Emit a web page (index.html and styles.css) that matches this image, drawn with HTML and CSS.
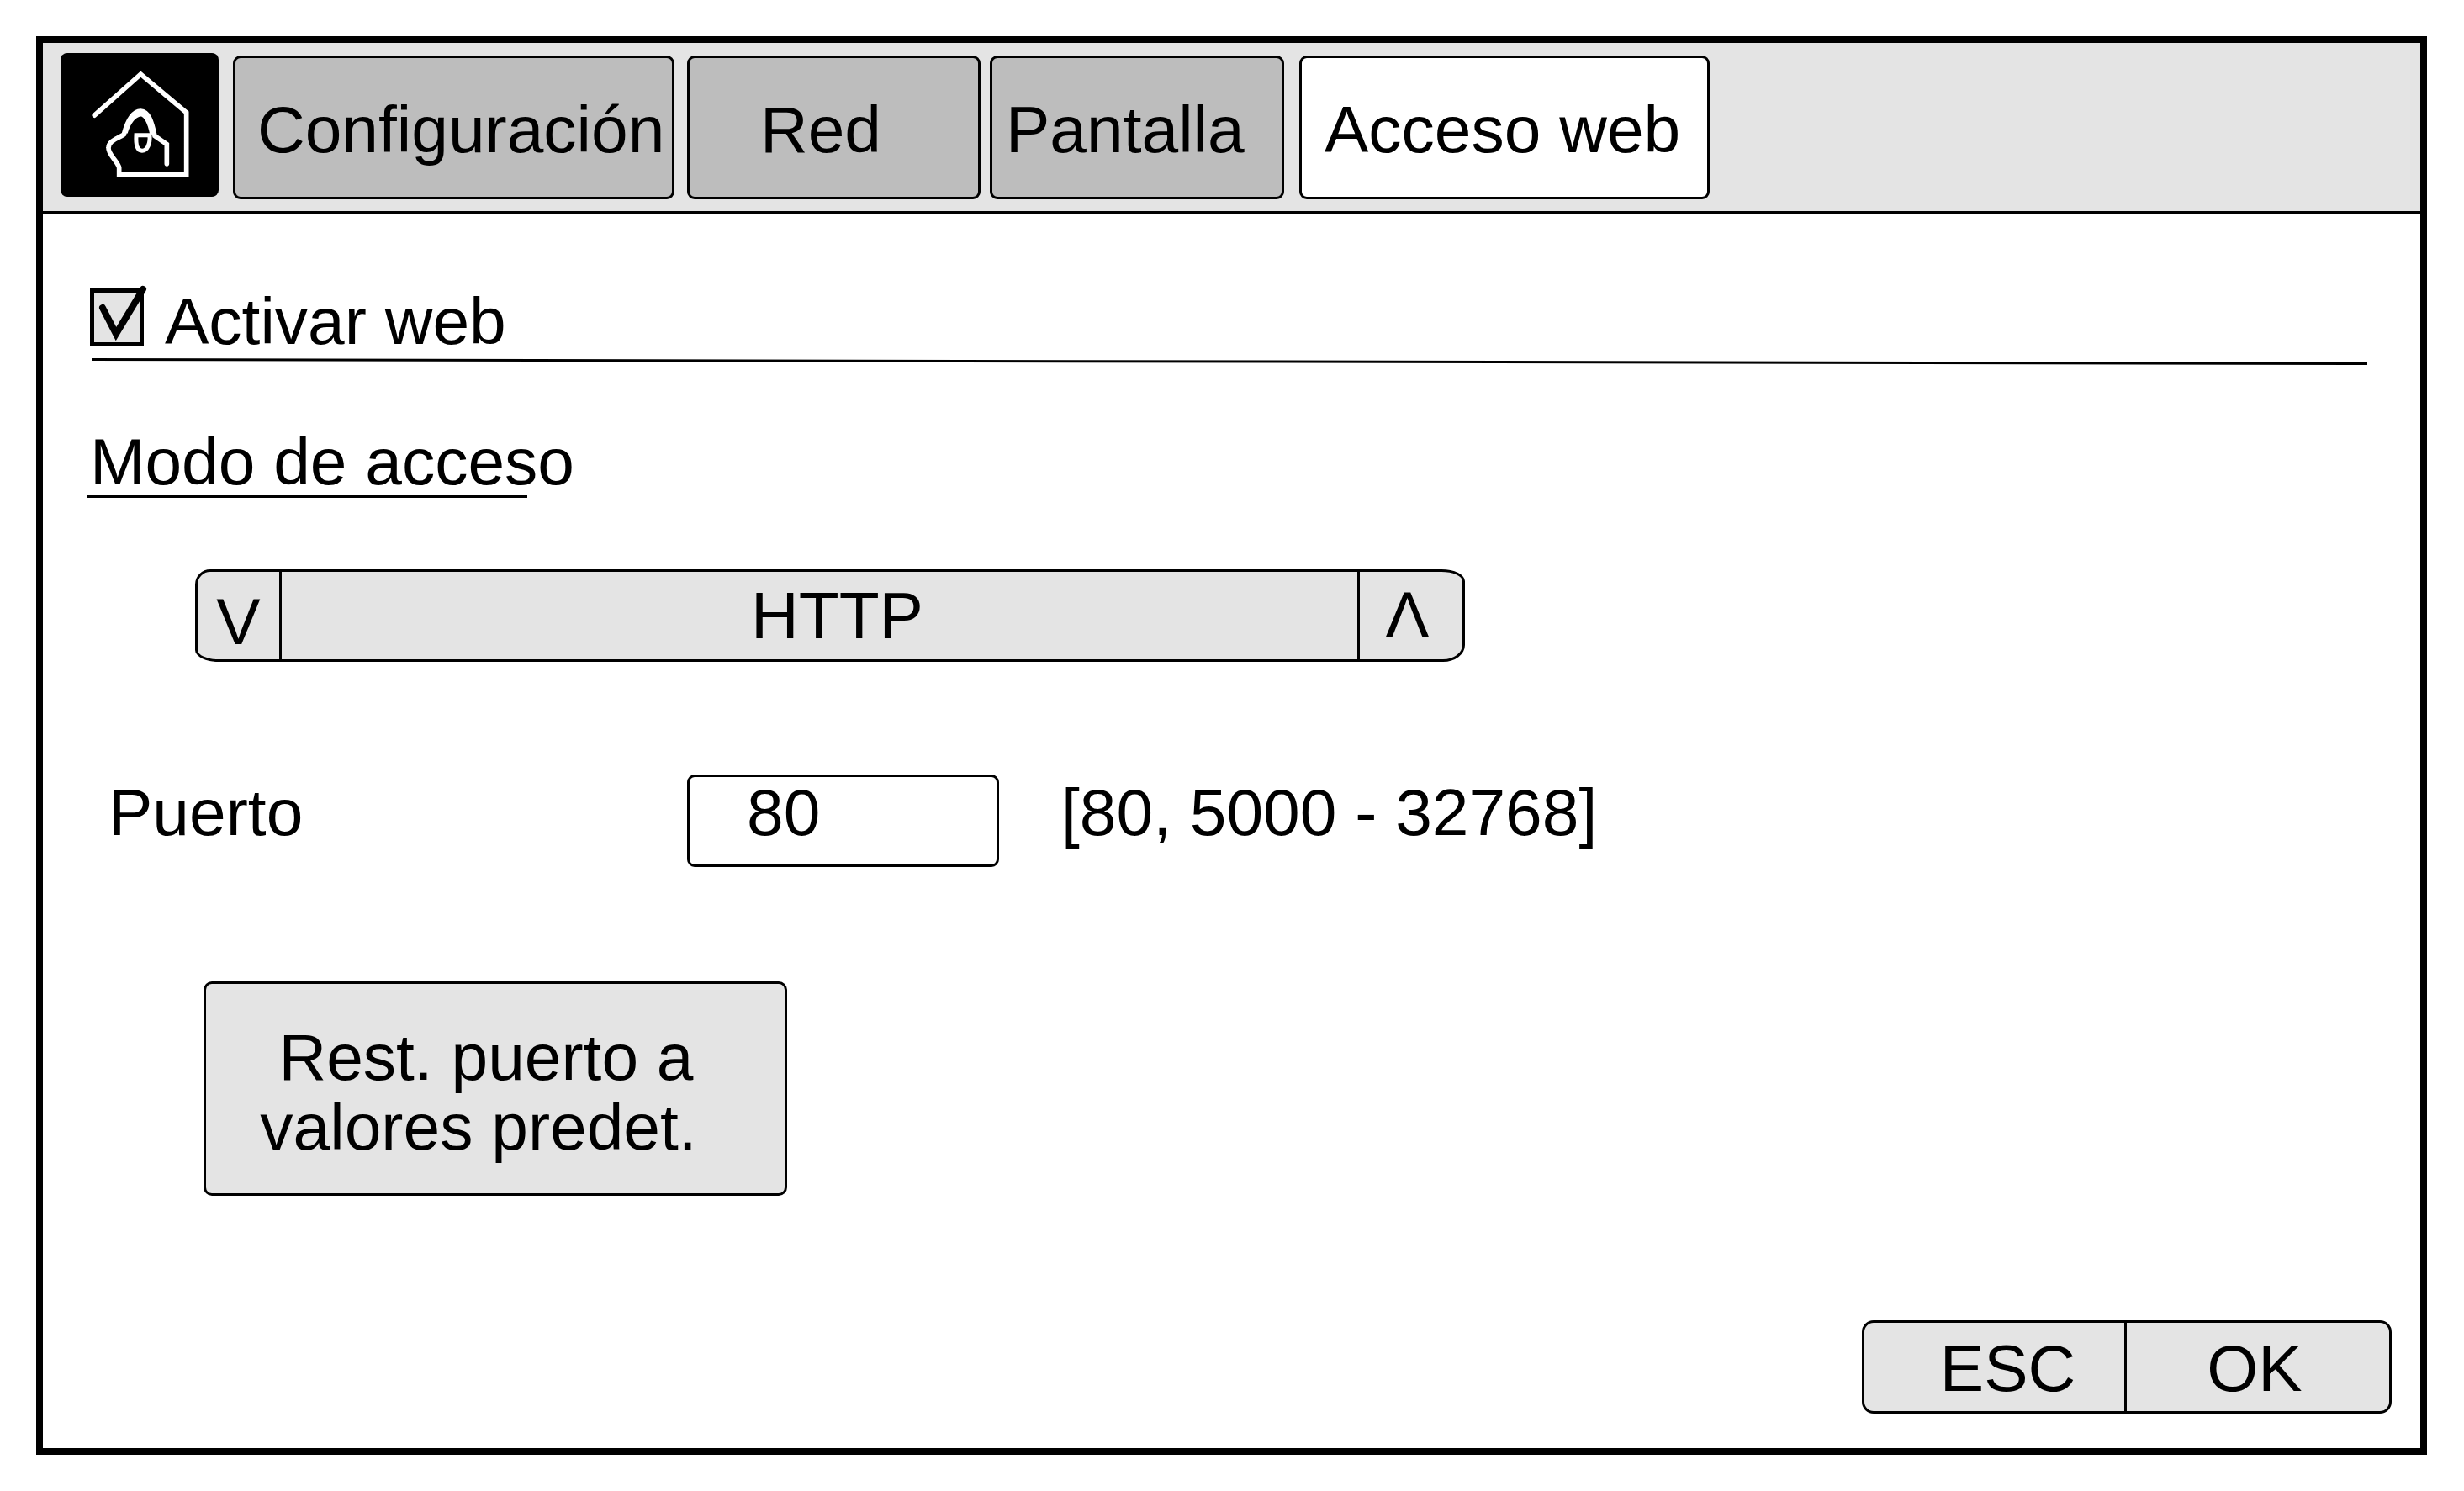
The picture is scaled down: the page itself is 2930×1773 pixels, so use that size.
FILE: index.html
```html
<!DOCTYPE html>
<html lang="en">
<head>
    <meta charset="UTF-8">
    <meta name="viewport" content="width=device-width, initial-scale=1.0">
    <title>Acceso web</title>
    <link rel="stylesheet" href="styles.css">
</head>
<body>
    <div class="frame">
        <div class="tabbar">
            <div class="home">
                <svg class="home-icon" viewBox="36 40 564 512" fill="none" stroke="#fff" stroke-width="17">
                    <path d="M157 262 L322 115 L485 252 V473 H245 V448 C238 425 205 400 207 378 C208 352 240 345 262 330 C275 280 295 248 322 247 C350 248 362 285 372 335 L415 365 V435" stroke-linecap="round"/>
                    <path d="M268 325 C280 285 298 262 322 258 C345 262 355 295 362 330" stroke-width="14"/>
                    <path d="M306 333 H354 C356 365 345 388 327 388 C310 388 304 370 306 333 Z" stroke-width="15"/>
                </svg>
            </div>
            <div class="tab tab-config">Configuración</div>
            <div class="tab tab-red">Red</div>
            <div class="tab tab-pantalla">Pantalla</div>
            <div class="tab tab-web active">Acceso web</div>
        </div>

        <div class="content">
            <div class="check-row">
                <div class="checkbox">
                    <svg class="tick" viewBox="0 0 66 69">
                        <polyline points="15,23 31,54 63,1" fill="none" stroke="#000" stroke-width="8" stroke-linecap="round"/>
                    </svg>
                </div>
                <span class="check-label">Activar web</span>
            </div>
            <svg class="check-rule" viewBox="0 0 2706 9">
                <line x1="0" y1="1.5" x2="2706" y2="6.5" stroke="#000" stroke-width="3"/>
            </svg>

            <div class="section-title">Modo de acceso</div>
            <div class="section-rule"></div>

            <div class="spinner">
                <div class="spin-btn spin-down">V</div>
                <div class="spin-value">HTTP</div>
                <div class="spin-btn spin-up">Λ</div>
            </div>

            <div class="port-row">
                <span class="port-label">Puerto</span>
                <div class="port-input">80</div>
                <span class="port-range">[80, 5000 - 32768]</span>
            </div>

            <div class="reset-btn">
                <span class="reset-line">Rest. puerto a</span>
                <span class="reset-line reset-line-second">valores predet.</span>
            </div>

            <div class="footer">
                <div class="actions">
                    <div class="action action-esc">ESC</div>
                    <div class="action action-ok">OK</div>
                </div>
            </div>
        </div>
    </div>
</body>
</html>
```

FILE: styles.css
```css
* {
    box-sizing: border-box;
}
body {
    margin: 0;
    padding: 43px 0 0 43px;
    background-color: #fff;
    color: #000;
    font-family: "Liberation Sans", Arial, sans-serif;
    font-size: 78.5px;
    line-height: 78px;
}
.frame {
    width: 2843px;
    height: 1687px;
    border: 8px solid #000;
}

/* top bar */
.tabbar {
    display: flex;
    align-items: flex-start;
    height: 203px;
    padding: 12px 0 0 21px;
    background-color: #e4e4e4;
    border-bottom: 3px solid #000;
}
.home {
    width: 188px;
    height: 171px;
    background-color: #000;
    border-radius: 8px;
}
.home-icon {
    display: block;
    width: 188px;
    height: 171px;
}
.tab {
    display: flex;
    align-items: center;
    height: 171px;
    margin-top: 3px;
    padding-top: 5px;
    background-color: #bdbdbd;
    border: 3px solid #000;
    border-radius: 9px;
    white-space: nowrap;
}
.tab.active {
    background-color: #fff;
}
.tab-config {
    width: 525px;
    margin-left: 17px;
    padding-left: 26px;
}
.tab-red {
    width: 349px;
    margin-left: 15px;
    padding-left: 84px;
}
.tab-pantalla {
    width: 350px;
    margin-left: 11px;
    padding-left: 16px;
}
.tab-web {
    width: 488px;
    margin-left: 18px;
    padding-left: 27px;
}

/* page body */
.content {
    padding: 89px 34px 0 56px;
}
.check-row {
    display: flex;
    height: 78px;
}
.checkbox {
    width: 64px;
    height: 69px;
    background-color: #e4e4e4;
    border: 5px solid #000;
}
.tick {
    display: block;
    width: 66px;
    height: 69px;
    margin: -5px 0 0 -5px;
    overflow: visible;
}
.check-label {
    margin-left: 25px;
}
.check-rule {
    display: block;
    width: 2706px;
    height: 9px;
    margin: 5px 0 0 2px;
}
.section-title {
    margin-top: 75px;
}
.section-rule {
    width: 523px;
    height: 3px;
    margin: 1px 0 0 -3px;
    background-color: #000;
}

/* HTTP spinner */
.spinner {
    display: flex;
    width: 1510px;
    height: 110px;
    margin: 85px 0 0 125px;
    background-color: #e4e4e4;
    border: 3px solid #000;
    border-radius: 18px 28px 26px 28px / 18px 14px 20px 14px;
}
.spin-btn {
    display: flex;
    justify-content: center;
    width: 97px;
}
.spin-down {
    padding-top: 20px;
}
.spin-up {
    width: 125px;
    padding: 12px 9px 0 0;
    border-left: 3px solid #000;
}
.spin-value {
    flex: 1;
    padding: 13px 0 0 42px;
    text-align: center;
    border-left: 3px solid #000;
}

/* port */
.port-row {
    display: flex;
    align-items: flex-start;
    margin-top: 134px;
}
.port-label {
    width: 688px;
    margin: 6px 0 0 22px;
}
.port-input {
    width: 371px;
    height: 110px;
    padding: 3px 0 0 68px;
    background-color: #fff;
    border: 3px solid #000;
    border-radius: 9px;
}
.port-range {
    margin: 6px 0 0 74px;
}

/* reset button */
.reset-btn {
    width: 694px;
    height: 255px;
    margin: 136px 0 0 135px;
    padding: 46px 22px 0 0;
    line-height: 83px;
    text-align: center;
    background-color: #e4e4e4;
    border: 3px solid #000;
    border-radius: 10px;
}
.reset-line {
    display: block;
}
.reset-line-second {
    margin-right: 18px;
}

/* ESC / OK */
.footer {
    display: flex;
    justify-content: flex-end;
    margin-top: 148px;
}
.actions {
    display: flex;
    width: 630px;
    height: 111px;
    background-color: #e4e4e4;
    border: 3px solid #000;
    border-radius: 14px;
}
.action {
    padding-top: 15px;
    text-align: center;
}
.action-esc {
    width: 309px;
    padding-left: 32px;
}
.action-ok {
    flex: 1;
    padding-right: 8px;
    border-left: 3px solid #000;
}
```
